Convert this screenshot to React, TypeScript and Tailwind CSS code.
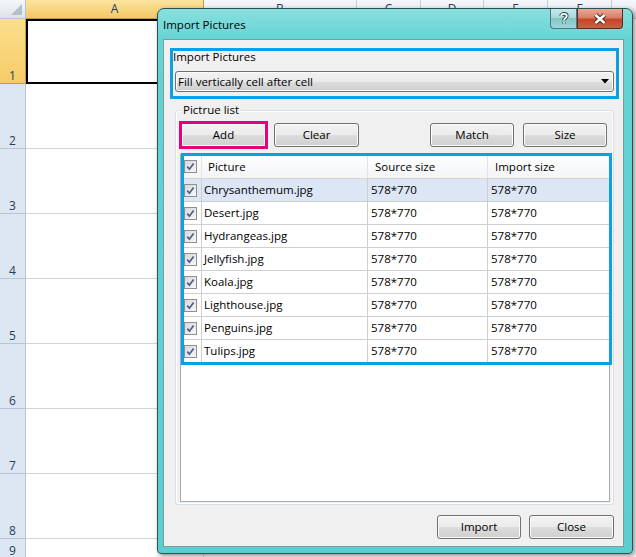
import React from 'react';

const files = [
  'Chrysanthemum.jpg',
  'Desert.jpg',
  'Hydrangeas.jpg',
  'Jellyfish.jpg',
  'Koala.jpg',
  'Lighthouse.jpg',
  'Penguins.jpg',
  'Tulips.jpg',
];

const columns = [
  { label: 'A', width: 'w-[178px]', selected: true },
  { label: 'B', width: 'w-[153px]', selected: false },
  { label: 'C', width: 'w-[64px]', selected: false },
  { label: 'D', width: 'w-[63px]', selected: false },
  { label: 'E', width: 'w-[64px]', selected: false },
  { label: 'F', width: 'w-[64px]', selected: false },
  { label: '', width: 'w-[64px]', selected: false },
];

const rowNumbers = [1, 2, 3, 4, 5, 6, 7, 8];

const face =
  'rounded-[3px] border border-[#707070] bg-[linear-gradient(180deg,#f2f2f2_0%,#ebebeb_50%,#dddddd_50%,#cfcfcf_100%)] shadow-[inset_0_0_0_1px_#fbfbfb] text-black';
const btn = `flex items-center justify-center ${face}`;

const Check = () => (
  <span className="flex h-[13px] w-[13px] items-center justify-center border border-[#8e8f8f] bg-[linear-gradient(135deg,#d8d8d8,#f7f7f7)]">
    <svg width="9" height="9" viewBox="0 0 9 9">
      <path d="M1.3 4.6 L3.4 7.2 L7.6 1.4" fill="none" stroke="#4b5f8d" strokeWidth="1.7" />
    </svg>
  </span>
);

const Spreadsheet = () => (
  <div className="flex flex-col">
    {/* column headers */}
    <div className="flex h-[19px]">
      <div className="relative w-[26px] shrink-0 border-r border-b border-[#b8c4d2] bg-[linear-gradient(180deg,#f4f6f9,#dde3ea)]">
        <svg className="absolute right-[3px] bottom-[3px]" width="11" height="11" viewBox="0 0 11 11">
          <path d="M11 0 L11 11 L0 11 Z" fill="#b3bfcc" />
        </svg>
      </div>
      {columns.map((c, i) => (
        <div
          key={i}
          className={`${c.width} shrink-0 border-r border-b text-center text-[12px] leading-[18px] ${
            c.selected
              ? 'border-[#c29b47] bg-[linear-gradient(180deg,#fbe3a0,#f4c865)] text-[#283d5a]'
              : 'border-[#c5cfdb] bg-[linear-gradient(180deg,#f5f7fa,#dfe5ec)] text-[#283d5a]'
          }`}
        >
          {c.label}
        </div>
      ))}
    </div>
    {rowNumbers.map((n) => (
      <div key={n} className="flex h-[65px]">
        <div
          className={`flex w-[26px] shrink-0 items-end justify-center border-r border-b text-[12px] leading-[14px] text-[#283d5a] ${
            n === 1
              ? 'border-[#c29b47] bg-[linear-gradient(180deg,#fbdf8c,#f6cb69)]'
              : 'border-[#b5c6d9] bg-[#dde7f3]'
          }`}
        >
          {n}
        </div>
        {n === 1 ? (
          <div className="w-[300px] shrink-0 border-2 border-black bg-white" />
        ) : (
          <div className="w-[600px] shrink-0 border-b border-[#d4d4d4] bg-white">
            <div className="h-full w-[178px] border-r border-[#d4d4d4]" />
          </div>
        )}
      </div>
    ))}
    {/* row 9, normal height */}
    <div className="flex h-[20px]">
      <div className="flex w-[26px] shrink-0 items-end justify-center border-r border-b border-[#b5c6d9] bg-[#dde7f3] text-[12px] leading-[14px] text-[#283d5a]">
        9
      </div>
      <div className="w-[600px] shrink-0 border-b border-[#d4d4d4] bg-white">
        <div className="h-full w-[178px] border-r border-[#d4d4d4]" />
      </div>
    </div>
  </div>
);

const Dialog = () => (
  <div className="absolute left-[157px] top-[8px] flex h-[546px] w-[476px] flex-col rounded-t-[7px] rounded-b-[4px] border border-[#2f4f50] bg-[linear-gradient(180deg,#8adfdf_0%,#63d3d4_6%,#5acfd0_100%)] pl-[5px] pr-[8px] pb-[6px] shadow-[2px_2px_5px_rgba(0,0,0,0.45)]">
    {/* title bar */}
    <div className="flex h-[30px] shrink-0 items-center pt-[1px] text-[11.5px] text-black">
      Import Pictures
    </div>
    <div className="absolute left-[392px] top-0 flex h-[20px] w-[27px] items-center justify-center rounded-bl-[4px] border border-t-0 border-[#4a7a7d] bg-[linear-gradient(180deg,#c5eaea_0%,#a6d6d7_50%,#86c4c6_50%,#9ad8d9_100%)]">
      <svg width="10" height="13" viewBox="0 0 10 13">
        <path d="M2.2 4 C2.2 1.2 7.8 1.2 7.8 4 C7.8 6 5 6 5 8.2 M5 10.2 L5 11.6" fill="none" stroke="#2d4347" strokeWidth="3.6" />
        <path d="M2.2 4 C2.2 1.2 7.8 1.2 7.8 4 C7.8 6 5 6 5 8.2 M5 10.2 L5 11.6" fill="none" stroke="#ffffff" strokeWidth="1.8" />
      </svg>
    </div>
    <div className="absolute left-[419px] top-0 flex h-[20px] w-[46px] items-center justify-center rounded-br-[4px] border border-t-0 border-[#5c2a22] bg-[linear-gradient(180deg,#e9a896_0%,#d98068_45%,#c7452c_55%,#d0603f_100%)]">
      <svg width="16" height="12" viewBox="0 0 16 12">
        <path d="M3.5 2 L12.5 10 M12.5 2 L3.5 10" fill="none" stroke="#4a2a24" strokeWidth="4.4" />
        <path d="M3.5 2 L12.5 10 M12.5 2 L3.5 10" fill="none" stroke="#ffffff" strokeWidth="2.4" />
      </svg>
    </div>

    {/* client area */}
    <div className="flex flex-1 flex-col border border-[#7e9a9b] bg-[#f0f0f0] text-[11.5px] text-black">
      <div className="ml-[6px] mt-[8px] h-[51px] w-[449px] border-[3px] border-[#0aa1e5]">
        <div className="-mt-[1px] h-[21px] leading-[14px]">Import Pictures</div>
        <div className={`${face} ml-[2px] flex h-[21px] w-[439px] items-center justify-between pl-[2px] pr-[4px]`}>
          <span className="leading-[18px]">Fill vertically cell after cell</span>
          <svg width="8" height="5" viewBox="0 0 8 5">
            <path d="M0 0 L8 0 L4 4.5 Z" fill="#000" />
          </svg>
        </div>
      </div>

      {/* Pictrue list group */}
      <div className="relative ml-[11px] mt-[11px] h-[395px] w-[439px] rounded-[3px] border border-[#d5dfe5] shadow-[inset_0_0_0_1px_#ffffff]">
        <div className="absolute -top-[9px] left-[5px] bg-[#f0f0f0] px-[2px] leading-[16px]">Pictrue list</div>
        <div className="ml-[3px] mt-[10px] flex items-center">
          <div className="h-[28px] w-[89px] border-[3px] border-[#e5007d]">
            <div className={`${btn} h-full w-full rounded-none border-0`}>Add</div>
          </div>
          <div className={`${btn} ml-[6px] h-[24px] w-[85px]`}>Clear</div>
          <div className={`${btn} ml-[71px] h-[24px] w-[84px]`}>Match</div>
          <div className={`${btn} ml-[9px] h-[24px] w-[84px]`}>Size</div>
        </div>

        {/* list view */}
        <div className="relative ml-[4px] mt-[5px] h-[348px] w-[430px] border border-[#a9abb0] bg-white">
          <div className="flex h-[24px] border-b border-[#d5d5d5] bg-[linear-gradient(180deg,#ffffff,#f3f4f6)] leading-[23px]">
            <div className="flex w-[21px] items-center border-r border-[#e3e3e3] pl-[3px]">
              <Check />
            </div>
            <div className="w-[166px] border-r border-[#e3e3e3] pl-[6px]">Picture</div>
            <div className="w-[120px] border-r border-[#e3e3e3] pl-[7px]">Source size</div>
            <div className="flex-1 pl-[7px]">Import size</div>
          </div>
          {files.map((f, i) => (
            <div
              key={f}
              className={`flex h-[23px] border-b border-[#cfcfcf] leading-[22px] ${i === 0 ? 'bg-[#dce6f5]' : ''}`}
            >
              <div className="flex w-[21px] items-center border-r border-[#cfcfcf] pl-[3px]">
                <Check />
              </div>
              <div className="w-[166px] border-r border-[#cfcfcf] pl-[2px]">{f}</div>
              <div className="w-[120px] border-r border-[#cfcfcf] pl-[3px]">578*770</div>
              <div className="flex-1 pl-[3px]">578*770</div>
            </div>
          ))}
          <div className="pointer-events-none absolute -top-[2px] left-0 h-[212px] w-[431px] border-[3px] border-[#0aa1e5]" />
        </div>
      </div>

      {/* bottom buttons */}
      <div className="mr-[9px] mt-[10px] flex justify-end gap-[8px]">
        <div className={`${btn} h-[24px] w-[84px] border-[#3c7fb1] shadow-[inset_0_0_0_1px_#a8e0f7]`}>Import</div>
        <div className={`${btn} h-[24px] w-[85px]`}>Close</div>
      </div>
    </div>
  </div>
);

const App = () => {
  return (
    <div className="relative h-[557px] w-[636px] overflow-hidden bg-white font-['Open_Sans',sans-serif]">
      <Spreadsheet />
      <Dialog />
    </div>
  );
};

export default App;
